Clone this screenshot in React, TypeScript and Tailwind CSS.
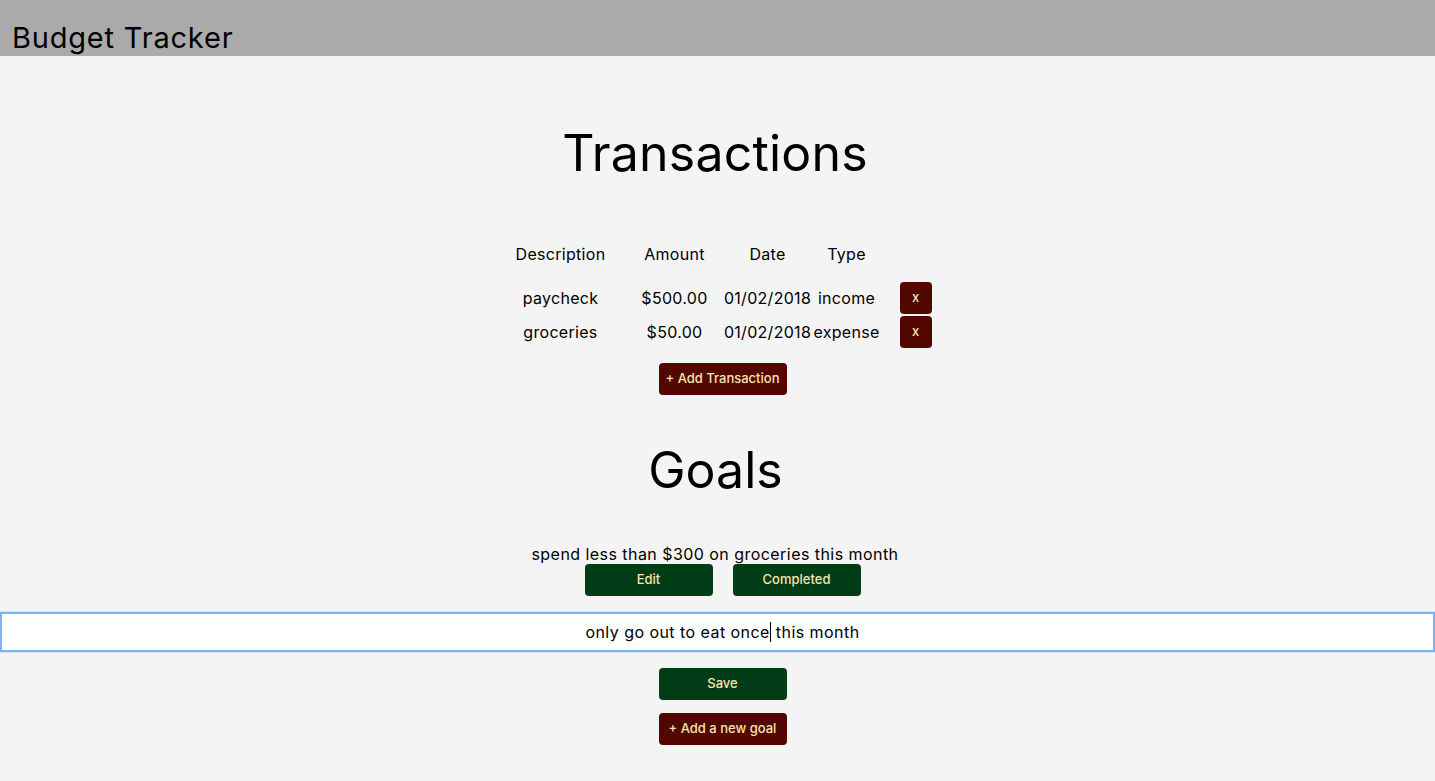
export default function App() {
  const rows = [
    { description: "paycheck", amount: "$500.00", date: "01/02/2018", type: "income" },
    { description: "groceries", amount: "$50.00", date: "01/02/2018", type: "expense" },
  ];

  const cell = "flex justify-center whitespace-nowrap";
  const maroonBtn =
    "h-8 rounded-[4px] bg-[#520800] text-[13px] text-[#fbe2b0] font-medium";
  const greenBtn =
    "h-8 w-32 rounded-[4px] bg-[#003d16] text-[13px] text-[#fbe2b0] font-medium";

  return (
    <div className="min-h-[781px] bg-[#f4f4f4] text-black font-['Inter',sans-serif]">
      <header className="h-14 bg-[#aaaaaa] px-3 pt-[23px]">
        <h1 className="text-[29px] leading-none tracking-[0.8px]">Budget Tracker</h1>
      </header>

      <section className="flex flex-col items-center">
        <h2 className="mt-[72px] mr-[5px] text-[50px] leading-none tracking-[0.2px]">Transactions</h2>

        <div className="mt-[60px] ml-[10px] flex flex-col text-[16px] tracking-[0.3px]">
          <div className="grid h-8 grid-cols-[124px_104px_82px_76px_62px] items-center">
            <span className={cell}>Description</span>
            <span className={cell}>Amount</span>
            <span className={cell}>Date</span>
            <span className={cell}>Type</span>
            <span />
          </div>
          <div className="mt-3 flex flex-col gap-[2px]">
            {rows.map((r) => (
              <div
                key={r.description}
                className="grid h-8 grid-cols-[124px_104px_82px_76px_62px] items-center"
              >
                <span className={cell}>{r.description}</span>
                <span className={cell}>{r.amount}</span>
                <span className={cell}>{r.date}</span>
                <span className={cell}>{r.type}</span>
                <span className="flex justify-center">
                  <button className={`${maroonBtn} w-8 tracking-normal`}>x</button>
                </span>
              </div>
            ))}
          </div>
        </div>

        <button className={`${maroonBtn} ml-[10px] mt-[15px] w-32`}>+ Add Transaction</button>

        <h2 className="mt-[50px] mr-[4px] text-[50px] leading-none">Goals</h2>

        <p className="mt-[49px] mr-[5px] text-[16px] leading-5 tracking-[0.45px]">
          spend less than $300 on groceries this month
        </p>
        <div className="ml-[10px] flex gap-5">
          <button className={greenBtn}>Edit</button>
          <button className={greenBtn}>Completed</button>
        </div>
      </section>

      <div className="mt-4 flex h-10 w-full items-center justify-center border-2 border-[#7db4f6] bg-white pl-[10px] text-[16px] tracking-[0.45px] shadow-[0_0_0_1px_#d3e5fb]">
        <span>only go out to eat once</span>
        <span className="h-5 w-px bg-black" />
        <span>&nbsp;this month</span>
      </div>

      <div className="flex flex-col items-center">
        <button className={`${greenBtn} ml-[10px] mt-4`}>Save</button>
        <button className={`${maroonBtn} ml-[10px] mt-[13px] w-32`}>+ Add a new goal</button>
      </div>
    </div>
  );
}
